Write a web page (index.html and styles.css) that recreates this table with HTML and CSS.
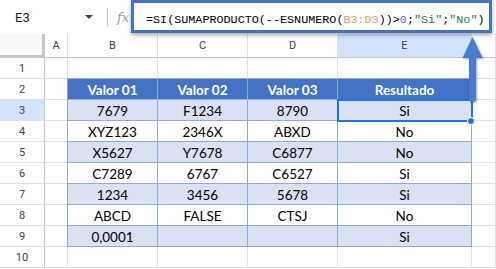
FILE: index.html
```html
<!DOCTYPE html>
<html lang="es">
<head>
  <meta charset="UTF-8" />
  <title>Hoja</title>
  <link rel="stylesheet" href="styles.css">
</head>
<body>

<div class="toolbar">
  <div class="namebox">
    <span>E3</span>
    <span class="caret"></span>
  </div>
  <span class="sep"></span>
  <span class="fx">fx</span>
  <div class="formula">=SI(SUMAPRODUCTO(--ESNUMERO(<span class="ref">B3:D3</span>))&gt;<span class="num">0</span>;<span class="str">"Si"</span>;<span class="str">"No"</span>)</div>
</div>

<div class="sheet">
  <div class="corner"></div>
  <div class="colhead">A</div>
  <div class="colhead">B</div>
  <div class="colhead">C</div>
  <div class="colhead">D</div>
  <div class="colhead active">E</div>
  <div class="colhead"></div>

  <!-- fila 1 -->
  <div class="rowhead">1</div>
  <div class="cell"></div><div class="cell"></div><div class="cell"></div><div class="cell"></div><div class="cell"></div><div class="cell"></div>

  <!-- filas 2..9: columna A y la del final; la tabla va encima -->
  <div class="rowhead">2</div><div class="cell"></div><div class="cell last" style="grid-row: 3"></div>
  <div class="rowhead active">3</div><div class="cell"></div><div class="cell last" style="grid-row: 4"></div>
  <div class="rowhead">4</div><div class="cell"></div><div class="cell last" style="grid-row: 5"></div>
  <div class="rowhead">5</div><div class="cell"></div><div class="cell last" style="grid-row: 6"></div>
  <div class="rowhead">6</div><div class="cell"></div><div class="cell last" style="grid-row: 7"></div>
  <div class="rowhead">7</div><div class="cell"></div><div class="cell last" style="grid-row: 8"></div>
  <div class="rowhead">8</div><div class="cell"></div><div class="cell last" style="grid-row: 9"></div>
  <div class="rowhead">9</div><div class="cell"></div><div class="cell last" style="grid-row: 10"></div>

  <!-- fila 10 -->
  <div class="rowhead">10</div>
  <div class="cell"></div><div class="cell"></div><div class="cell"></div><div class="cell"></div><div class="cell"></div><div class="cell"></div>

  <div class="table">
    <div class="th">Valor 01</div><div class="th">Valor 02</div><div class="th">Valor 03</div><div class="th">Resultado</div>
    <div class="td band">7679</div><div class="td band">F1234</div><div class="td band">8790</div><div class="td band">Si</div>
    <div class="td">XYZ123</div><div class="td">2346X</div><div class="td">ABXD</div><div class="td">No</div>
    <div class="td band">X5627</div><div class="td band">Y7678</div><div class="td band">C6877</div><div class="td band">No</div>
    <div class="td">C7289</div><div class="td">6767</div><div class="td">C6527</div><div class="td">Si</div>
    <div class="td band">1234</div><div class="td band">3456</div><div class="td band">5678</div><div class="td band">Si</div>
    <div class="td">ABCD</div><div class="td">FALSE</div><div class="td">CTSJ</div><div class="td">No</div>
    <div class="td band">0,0001</div><div class="td band"></div><div class="td band"></div><div class="td band">Si</div>
  </div>

  <div class="selection"></div>
  <div class="handle"></div>

  <svg class="arrow" viewBox="0 0 30 72" width="30" height="72" xmlns="http://www.w3.org/2000/svg">
    <path d="M14.5 3 L24.5 24 L18 24 L18 64.5 A3.5 3.5 0 0 1 11 64.5 L11 24 L4.5 24 Z" fill="#4b7bcd"/>
  </svg>
</div>

</body>
</html>
```

FILE: styles.css
```css
body {
  margin: 0;
  width: 496px;
  height: 269px;
  overflow: hidden;
  background: #fff;
  font-family: Roboto, "Liberation Sans", sans-serif;
  color: #202124;
}

/* barra de fórmulas */
.toolbar {
  position: relative;
  z-index: 3;
  height: 34px;
  display: flex;
  align-items: center;
}
.namebox {
  width: 78px;
  padding-left: 15px;
  display: flex;
  align-items: center;
  font-size: 13px;
}
.caret {
  margin-left: auto;
  width: 0;
  height: 0;
  border-left: 4px solid transparent;
  border-right: 4px solid transparent;
  border-top: 4px solid #444;
}
.sep {
  width: 1px;
  height: 18px;
  background: #c7c7c7;
  margin-left: 14px;
}
.fx {
  margin-left: 9px;
  width: 14px;
  font-family: "DejaVu Serif", serif;
  font-style: italic;
  font-size: 13px;
  color: #9aa0a6;
}
.formula {
  flex: 1;
  align-self: flex-start;
  height: 33px;
  margin-right: 4px;
  padding: 10px 0 0 12px;
  box-sizing: border-box;
  border: 3px solid #4472c4;
  background: #fff;
  box-shadow: 0 2px 4px rgba(0,0,0,0.35);
  font-family: "Liberation Mono", monospace;
  font-size: 11.75px;
  line-height: 14px;
  color: #000;
  white-space: nowrap;
}
.formula .ref { color: #ec9a5b; }
.formula .num { color: #7a5fd6; }
.formula .str { color: #188038; }

/* cuadrícula */
.sheet {
  position: relative;
  display: grid;
  grid-template-columns: 45px 23px 90px 90px 90px 134px 24px;
  grid-template-rows: 24px repeat(10, 21px);
}
.sheet > div {
  box-sizing: border-box;
}
.corner {
  background: #f8f9fa;
  border-right: 3px solid #c7c7c7;
  border-bottom: 3px solid #c7c7c7;
}
.colhead {
  border-right: 1px solid #e1e1e1;
  border-bottom: 1px solid #c7c7c7;
  font-size: 11px;
  color: #444;
  display: flex;
  align-items: center;
  justify-content: center;
}
.rowhead {
  grid-column: 1;
  border-right: 1px solid #c7c7c7;
  border-bottom: 1px solid #e1e1e1;
  font-size: 11px;
  color: #444;
  display: flex;
  align-items: center;
  justify-content: center;
}
.active {
  background: #d3e3fd;
}
.cell {
  border-right: 1px solid #e1e1e1;
  border-bottom: 1px solid #e1e1e1;
}
.cell.last {
  grid-column: 7;
}

/* tabla con formato */
.table {
  grid-column: 3 / 7;
  grid-row: 3 / 11;
  margin: -1px 0 0 -1px;
  display: grid;
  grid-template-columns: 90px 90px 90px 134px;
  grid-template-rows: repeat(8, 21px);
  border-top: 1px solid #8eaadb;
  border-left: 1px solid #8eaadb;
  font-family: Lato, "Liberation Sans", sans-serif;
  font-size: 13.5px;
  color: #000;
}
.th, .td {
  box-sizing: border-box;
  border-right: 1px solid #8eaadb;
  border-bottom: 1px solid #8eaadb;
  display: flex;
  align-items: center;
  justify-content: center;
  padding-top: 1px;
}
.th {
  background: #4472c4;
  color: #fff;
  font-weight: 700;
}
.td.band {
  background: #d9e1f2;
}

/* celda seleccionada y flecha (coordenadas dentro de .sheet) */
.selection {
  position: absolute;
  left: 337px;
  top: 65px;
  width: 136px;
  height: 23px;
  border: 2px solid #1a73e8;
}
.handle {
  position: absolute;
  left: 467px;
  top: 83px;
  width: 8px;
  height: 8px;
  border-radius: 50%;
  background: #1a73e8;
  border: 1px solid #fff;
}
.arrow {
  position: absolute;
  left: 458px;
  top: 0;
  filter: drop-shadow(1px 1px 1px rgba(0,0,0,0.35));
}
```
